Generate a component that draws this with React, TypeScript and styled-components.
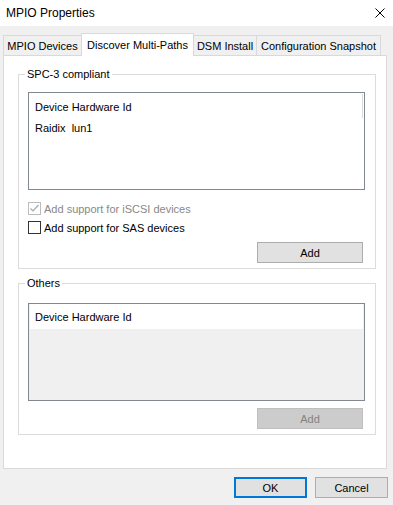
import styled, { createGlobalStyle } from 'styled-components';

const GlobalStyle = createGlobalStyle`
  html, body {
    margin: 0;
    padding: 0;
  }
  body {
    background: #f0f0f0;
    font-family: "Liberation Sans", Arial, sans-serif;
    font-size: 11px;
    color: #000;
  }
`;

const tabs = [
    { label: 'MPIO Devices', width: 79 },
    { label: 'Discover Multi-Paths', width: 113, active: true },
    { label: 'DSM Install', width: 64 },
    { label: 'Configuration Snapshot', width: 125 },
];

function Check({ checked, disabled }: { checked?: boolean; disabled?: boolean }) {
    return (
        <CheckBox $disabled={disabled}>
            {checked && (
                <svg width="11" height="11" viewBox="0 0 11 11">
                    <path d="M1.5 5.5 L4 8 L9.5 2" fill="none" stroke={disabled ? '#a8a8a8' : '#000'} strokeWidth="1.2" />
                </svg>
            )}
        </CheckBox>
    );
}

export default function App() {
    return (
        <Window>
            <GlobalStyle />
            <TitleBar>
                <Title>MPIO Properties</Title>
                <svg width="10" height="10" viewBox="0 0 10 10">
                    <path d="M0.5 0.5 L9.5 9.5 M9.5 0.5 L0.5 9.5" stroke="#000" strokeWidth="1" />
                </svg>
            </TitleBar>

            <TabStrip>
                {tabs.map((t) => (
                    <Tab key={t.label} $width={t.width} $active={t.active}>
                        {t.label}
                    </Tab>
                ))}
            </TabStrip>

            <Panel>
                <Group>
                    <Legend>SPC-3 compliant</Legend>
                    <ListBox $gap={10}>
                        <ListRow>Device Hardware Id</ListRow>
                        <ListRow>{'Raidix  lun1'}</ListRow>
                        <ColumnDivider />
                    </ListBox>
                    <CheckRow $first>
                        <Check checked disabled />
                        <CheckLabel $disabled>Add support for iSCSI devices</CheckLabel>
                    </CheckRow>
                    <CheckRow>
                        <Check />
                        <CheckLabel>Add support for SAS devices</CheckLabel>
                    </CheckRow>
                    <ButtonRow>
                        <Button>Add</Button>
                    </ButtonRow>
                </Group>

                <Group $spaced>
                    <Legend>Others</Legend>
                    <ListBox $gap={12} $disabled>
                        <ListRow $tall>Device Hardware Id</ListRow>
                    </ListBox>
                    <ButtonRow $gap={7}>
                        <Button disabled>Add</Button>
                    </ButtonRow>
                </Group>
            </Panel>

            <Footer>
                <Button $width={73} $default>OK</Button>
                <Button $width={73}>Cancel</Button>
            </Footer>
        </Window>
    );
}

// Styled Components
const Window = styled.div`
    width: 393px;
    height: 505px;
    display: flex;
    flex-direction: column;
    background: #f0f0f0;
    overflow: hidden;
`;

const TitleBar = styled.div`
    height: 26px;
    background: #fff;
    display: flex;
    align-items: center;
    justify-content: space-between;
    padding: 0 8px 0 6px;
    flex-shrink: 0;
`;

const Title = styled.span`
    font-size: 12px;
`;

const TabStrip = styled.div`
    height: 22px;
    margin-top: 7px;
    padding-left: 3px;
    display: flex;
    align-items: flex-end;
    flex-shrink: 0;
`;

const Tab = styled.div<{ $active?: boolean; $width: number }>`
    box-sizing: border-box;
    width: ${(p) => p.$width}px;
    height: ${(p) => (p.$active ? 23 : 20)}px;
    margin-left: -1px;
    margin-bottom: ${(p) => (p.$active ? -1 : 0)}px;
    padding-bottom: ${(p) => (p.$active ? 1 : 0)}px;
    border: 1px solid #d9d9d9;
    border-bottom: none;
    background: ${(p) => (p.$active ? '#fff' : '#f0f0f0')};
    position: relative;
    z-index: ${(p) => (p.$active ? 2 : 1)};
    display: flex;
    align-items: center;
    justify-content: center;
    white-space: nowrap;

    &:first-child {
        margin-left: 0;
    }
`;

const Panel = styled.div`
    box-sizing: border-box;
    width: 384px;
    height: 414px;
    margin-left: 3px;
    border: 1px solid #d9d9d9;
    background: #fff;
    padding: 11px 10px 0 14px;
    flex-shrink: 0;
`;

const Group = styled.fieldset<{ $spaced?: boolean }>`
    margin: ${(p) => (p.$spaced ? 7 : 0)}px 0 0;
    padding: 0 10px 5px 9px;
    border: 1px solid #dcdcdc;
    min-width: 0;
`;

const Legend = styled.legend`
    margin-left: -3px;
    padding: 0 2px;
    line-height: 15px;
`;

const ListBox = styled.div<{ $gap: number; $disabled?: boolean }>`
    box-sizing: border-box;
    height: 98px;
    margin-top: ${(p) => p.$gap}px;
    border: 1px solid #828790;
    background: ${(p) => (p.$disabled ? '#f0f0f0' : '#fff')};
    padding: ${(p) => (p.$disabled ? '0 1px' : '4px 0 0')};
    position: relative;
`;

const ListRow = styled.div<{ $tall?: boolean }>`
    box-sizing: border-box;
    height: ${(p) => (p.$tall ? 25 : 21)}px;
    line-height: 21px;
    padding: ${(p) => (p.$tall ? '3px 0 0 5px' : '0 0 0 6px')};
    background: #fff;
    white-space: pre;
`;

const ColumnDivider = styled.div`
    position: absolute;
    right: 1px;
    top: 1px;
    width: 1px;
    height: 24px;
    background: #dadada;
`;

const CheckRow = styled.div<{ $first?: boolean }>`
    height: 19px;
    margin-top: ${(p) => (p.$first ? 9 : 0)}px;
    display: flex;
    align-items: center;
    gap: 3px;
`;

const CheckBox = styled.span<{ $disabled?: boolean }>`
    box-sizing: border-box;
    width: 13px;
    height: 13px;
    border: 1px solid ${(p) => (p.$disabled ? '#bcbcbc' : '#333')};
    background: #fff;
    display: flex;
    align-items: center;
    justify-content: center;
`;

const CheckLabel = styled.span<{ $disabled?: boolean }>`
    color: ${(p) => (p.$disabled ? '#888' : '#000')};
`;

const ButtonRow = styled.div<{ $gap?: number }>`
    display: flex;
    justify-content: flex-end;
    margin-top: ${(p) => p.$gap ?? 5}px;
    padding-right: 2px;
`;

const Button = styled.button<{ $width?: number; $default?: boolean }>`
    box-sizing: border-box;
    width: ${(p) => p.$width ?? 106}px;
    height: 21px;
    padding: 0;
    border: ${(p) => (p.$default ? '2px solid #0078d7' : '1px solid #adadad')};
    border-radius: 0;
    background: #e1e1e1;
    color: #000;
    font-family: inherit;
    font-size: 11px;

    &:disabled {
        background: #cccccc;
        border-color: #bfbfbf;
        color: #838383;
    }
`;

const Footer = styled.div`
    display: flex;
    justify-content: flex-end;
    gap: 8px;
    padding: 8px 5px 0 0;
`;
